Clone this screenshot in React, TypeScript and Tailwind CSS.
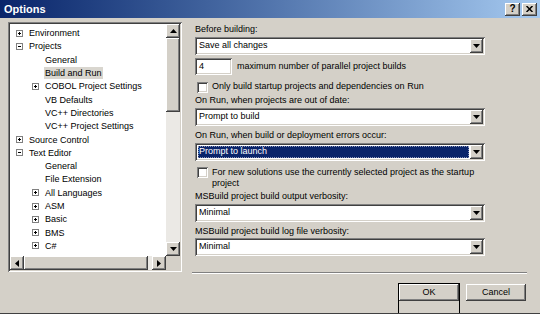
import React from 'react';

const raised =
  'shadow-[inset_-1px_-1px_#404040,inset_1px_1px_#ffffff,inset_-2px_-2px_#808080,inset_2px_2px_#d4d0c8]';
const sunken =
  'shadow-[inset_1px_1px_#808080,inset_-1px_-1px_#ffffff,inset_2px_2px_#404040,inset_-2px_-2px_#d4d0c8]';

type Dir = 'up' | 'down' | 'left' | 'right';

function Arrow({ dir }: { dir: Dir }) {
  const pts: Record<Dir, string> = {
    up: '3.5,0 7,4 0,4',
    down: '0,0 7,0 3.5,4',
    left: '4,0 4,7 0,3.5',
    right: '0,0 4,3.5 0,7',
  };
  const vertical = dir === 'up' || dir === 'down';
  return (
    <svg width={vertical ? 7 : 4} height={vertical ? 4 : 7} viewBox={vertical ? '0 0 7 4' : '0 0 4 7'}>
      <polygon points={pts[dir]} fill="#000" />
    </svg>
  );
}

function ArrowButton({ dir }: { dir: Dir }) {
  return (
    <div className={`flex h-[14px] w-[14px] shrink-0 items-center justify-center bg-[#d4d0c8] ${raised}`}>
      <Arrow dir={dir} />
    </div>
  );
}

function Expander({ open }: { open: boolean }) {
  return (
    <svg width="7" height="7" viewBox="0 0 7 7" className="shrink-0">
      <rect x="0.5" y="0.5" width="6" height="6" fill="#fff" stroke="#808080" />
      <line x1="2" y1="3.5" x2="5" y2="3.5" stroke="#000" />
      {!open && <line x1="3.5" y1="2" x2="3.5" y2="5" stroke="#000" />}
    </svg>
  );
}

type Node = { label: string; level: 0 | 1; box?: 'open' | 'closed'; selected?: boolean };

const nodes: Node[] = [
  { label: 'Environment', level: 0, box: 'closed' },
  { label: 'Projects', level: 0, box: 'open' },
  { label: 'General', level: 1 },
  { label: 'Build and Run', level: 1, selected: true },
  { label: 'COBOL Project Settings', level: 1, box: 'closed' },
  { label: 'VB Defaults', level: 1 },
  { label: 'VC++ Directories', level: 1 },
  { label: 'VC++ Project Settings', level: 1 },
  { label: 'Source Control', level: 0, box: 'closed' },
  { label: 'Text Editor', level: 0, box: 'open' },
  { label: 'General', level: 1 },
  { label: 'File Extension', level: 1 },
  { label: 'All Languages', level: 1, box: 'closed' },
  { label: 'ASM', level: 1, box: 'closed' },
  { label: 'Basic', level: 1, box: 'closed' },
  { label: 'BMS', level: 1, box: 'closed' },
  { label: 'C#', level: 1, box: 'closed' },
];

function TreeRow({ node }: { node: Node }) {
  return (
    <div className="flex h-[13.3px] items-center whitespace-nowrap">
      <div className={node.level === 0 ? 'w-[6px] shrink-0' : 'w-[22px] shrink-0'} />
      <div className="flex w-[7px] shrink-0 items-center">
        {node.box && <Expander open={node.box === 'open'} />}
      </div>
      <div className="w-[5px] shrink-0" />
      <span className={`px-[1px] leading-[12px] ${node.selected ? 'bg-[#d9d6cf]' : ''}`}>{node.label}</span>
    </div>
  );
}

function Tree() {
  return (
    <div className={`flex h-[250px] w-[174px] flex-col bg-white p-[2px] ${sunken}`}>
      <div className="flex min-h-0 flex-1">
        <div className="min-w-0 flex-1 overflow-hidden pt-[2.5px]">
          {nodes.map((n, i) => (
            <TreeRow key={i} node={n} />
          ))}
        </div>
        <div className="flex w-[14px] flex-col bg-[#ebe9e5]">
          <ArrowButton dir="up" />
          <div className={`h-[74px] w-[14px] bg-[#d4d0c8] ${raised}`} />
          <div className="flex-1" />
          <ArrowButton dir="down" />
        </div>
      </div>
      <div className="flex h-[14px]">
        <div className="flex flex-1 bg-[#ebe9e5]">
          <ArrowButton dir="left" />
          <div className={`h-[14px] w-[124px] bg-[#d4d0c8] ${raised}`} />
          <div className="flex-1" />
          <ArrowButton dir="right" />
        </div>
        <div className="w-[14px] bg-[#d4d0c8]" />
      </div>
    </div>
  );
}

function Combo({ value, selected }: { value: string; selected?: boolean }) {
  return (
    <div className={`flex h-[18px] w-[290px] bg-white p-[2px] ${sunken}`}>
      <div className="flex min-w-0 flex-1 p-[1px]">
        <div
          className={`flex w-full items-center pl-[1px] ${
            selected ? 'bg-[#0a246a] text-white outline-1 outline-dotted outline-[#8a94b8] -outline-offset-1' : ''
          }`}
        >
          {value}
        </div>
      </div>
      <div className={`flex w-[13px] items-center justify-center bg-[#d4d0c8] ${raised}`}>
        <Arrow dir="down" />
      </div>
    </div>
  );
}

function Checkbox() {
  return <div className={`h-[11px] w-[11px] shrink-0 bg-white ${sunken}`} />;
}

function Label({ text, className = '' }: { text: string; className?: string }) {
  return <div className={`flex h-[12px] items-center whitespace-nowrap ${className}`}>{text}</div>;
}

function Button({ text, isDefault }: { text: string; isDefault?: boolean }) {
  return (
    <div className={isDefault ? 'border border-black' : 'border border-transparent'}>
      <div className={`flex h-[17px] w-[60px] items-center justify-center bg-[#d4d0c8] ${raised}`}>{text}</div>
    </div>
  );
}

function TitleButton({ children }: { children: React.ReactNode }) {
  return (
    <div
      className={`flex h-[13px] w-[15px] items-center justify-center bg-[#d4d0c8] text-[10px] font-bold leading-none text-black ${raised}`}
    >
      {children}
    </div>
  );
}

export default function App() {
  return (
    <div
      className="flex h-[314px] w-[540px] flex-col overflow-hidden border-b border-[#404040] bg-[#d4d0c8] text-[9px] text-black"
      style={{ fontFamily: '"Liberation Sans", Arial, sans-serif' }}
    >
      {/* Title bar */}
      <div className="flex h-[18px] shrink-0 items-center bg-gradient-to-r from-[#0a246a] to-[#a6caf0] pl-[4px] pr-[3px]">
        <span className="text-[11px] font-bold text-white">Options</span>
        <div className="flex-1" />
        <div className="flex gap-[2px]">
          <TitleButton>?</TitleButton>
          <TitleButton>
            <svg width="7" height="6" viewBox="0 0 7 6">
              <path d="M0.5 0 L6.5 6 M6.5 0 L0.5 6" stroke="#000" strokeWidth="1.5" />
            </svg>
          </TitleButton>
        </div>
      </div>

      {/* Body */}
      <div className="flex flex-1 pl-[8px] pt-[4px]">
        <div className="flex flex-col">
          <Tree />
        </div>

        <div className="flex flex-col pl-[13px]">
          <Label text="Before building:" className="mt-[2px]" />
          <div className="mt-[1px]">
            <Combo value="Save all changes" />
          </div>

          <div className="mt-[3px] flex h-[17px] items-center">
            <div className={`flex h-[17px] w-[37px] items-center bg-white pl-[4px] ${sunken}`}>4</div>
            <span className="pl-[5px] whitespace-nowrap">maximum number of parallel project builds</span>
          </div>

          <div className="mt-[5px] flex h-[14px] items-center">
            <div className="pl-[2px]" />
            <Checkbox />
            <span className="pl-[4px] whitespace-nowrap">Only build startup projects and dependencies on Run</span>
          </div>

          <Label text="On Run, when projects are out of date:" className="mt-[1px]" />
          <div className="mt-[1px]">
            <Combo value="Prompt to build" />
          </div>

          <Label text="On Run, when build or deployment errors occur:" className="mt-[4px]" />
          <div className="mt-[1px]">
            <Combo value="Prompt to launch" selected />
          </div>

          <div className="mt-[6px] flex">
            <div className="pl-[2px]" />
            <Checkbox />
            <span className="pl-[4px] leading-[10.5px]">
              For new solutions use the currently selected project as the startup
              <br />
              project
            </span>
          </div>

          <Label text="MSBuild project build output verbosity:" className="mt-[3px]" />
          <div className="mt-[1px]">
            <Combo value="Minimal" />
          </div>

          <Label text="MSBuild project build log file verbosity:" className="mt-[4px]" />
          <div>
            <Combo value="Minimal" />
          </div>
        </div>
      </div>

      {/* Separator */}
      <div className="ml-[192px] mr-[13px] h-[2px] shrink-0 border-t border-b border-t-[#808080] border-b-white" />

      {/* Buttons */}
      <div className="flex h-[41px] shrink-0 justify-end gap-[5px] pr-[13px] pt-[9px]">
        <Button text="OK" isDefault />
        <Button text="Cancel" />
      </div>
    </div>
  );
}
